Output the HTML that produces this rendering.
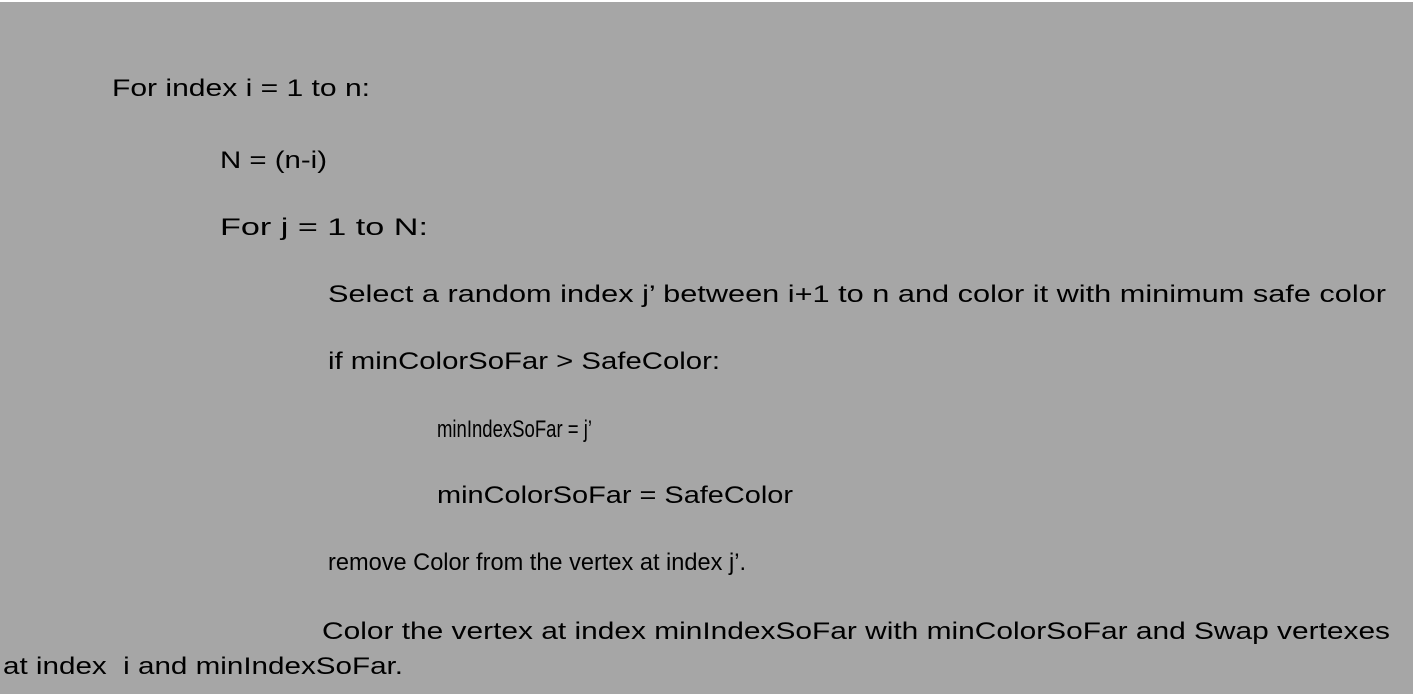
<!DOCTYPE html>
<html><head><meta charset="utf-8"><style>
html,body{margin:0;padding:0;background:#fff;}
svg{display:block;}
text{font-family:"Liberation Sans",sans-serif;font-size:24px;fill:#000;}
</style></head><body>
<svg width="1417" height="694" xmlns="http://www.w3.org/2000/svg">
<rect x="0" y="2" width="1413" height="692" fill="#a6a6a6"/>
<text x="112" y="96" textLength="258" lengthAdjust="spacingAndGlyphs">For index i = 1 to n:</text>
<text x="220" y="168" textLength="107" lengthAdjust="spacingAndGlyphs">N = (n-i)</text>
<text x="220" y="235" textLength="208" lengthAdjust="spacingAndGlyphs">For j = 1 to N:</text>
<text x="328" y="302" textLength="1058" lengthAdjust="spacingAndGlyphs">Select a random index j’ between i+1 to n and color it with minimum safe color</text>
<text x="328" y="369" textLength="392" lengthAdjust="spacingAndGlyphs">if minColorSoFar &gt; SafeColor:</text>
<text x="437" y="437" textLength="155" lengthAdjust="spacingAndGlyphs">minIndexSoFar = j’</text>
<text x="437" y="503" textLength="356" lengthAdjust="spacingAndGlyphs">minColorSoFar = SafeColor</text>
<text x="328" y="570" textLength="418" lengthAdjust="spacingAndGlyphs">remove Color from the vertex at index j’.</text>
<text x="322" y="639" textLength="1068" lengthAdjust="spacingAndGlyphs">Color the vertex at index minIndexSoFar with minColorSoFar and Swap vertexes</text>
<text x="3" y="674" textLength="400" lengthAdjust="spacingAndGlyphs" xml:space="preserve">at index  i and minIndexSoFar.</text>
</svg>
</body></html>
